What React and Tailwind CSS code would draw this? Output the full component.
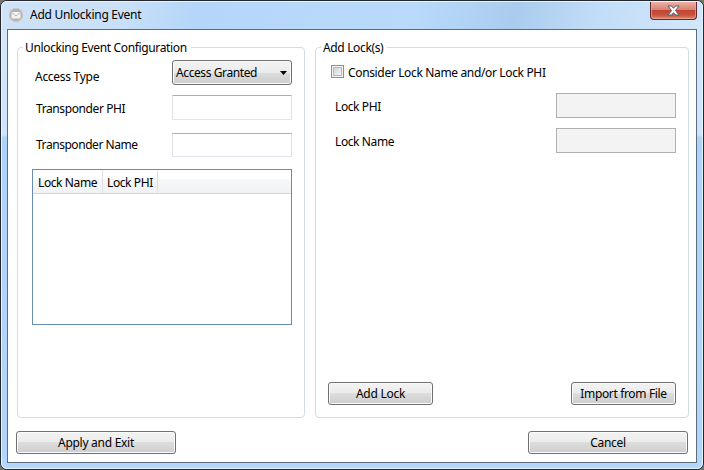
const buttonFace =
  'flex items-center justify-center h-[23px] rounded-[3px] border border-[#707070] bg-[linear-gradient(#f3f3f3_0%,#ebebeb_50%,#dddddd_50%,#cdcdcd_100%)] shadow-[inset_0_0_0_1px_#fafafa] whitespace-nowrap';

function Button({ className, children }) {
  return <button className={`${buttonFace} ${className}`}>{children}</button>;
}

function GroupBox({ title, className, children }) {
  return (
    <fieldset className={`h-[378px] rounded-[4px] border border-[#d0dde4] ${className}`}>
      <legend className="ml-[5px] h-[15px] pr-[4px] pl-[2px] leading-[16px] whitespace-nowrap tracking-[-0.35px]">{title}</legend>
      {children}
    </fieldset>
  );
}

function TitleBar() {
  return (
    <header className="flex h-[27px] shrink-0 items-start">
      <svg className="mt-[5px] ml-[6px] shrink-0" width="16" height="16" viewBox="0 0 16 16">
        <circle cx="8" cy="8" r="6.8" fill="#b5b3b2" stroke="#c9cbcd" />
        <rect x="3.5" y="5" width="9" height="6.5" rx="1" fill="#f4f4f4" />
        <path d="M3.8 5.6 8 9l4.2-3.4" fill="none" stroke="#b5b3b2" strokeWidth="0.9" />
      </svg>
      <h1 className="mt-[5px] ml-[6px] text-[12px] leading-[16px] whitespace-nowrap tracking-[-0.28px]">Add Unlocking Event</h1>
      <button className="mr-[5px] ml-auto flex h-[18px] w-[47px] items-center justify-center rounded-b-[4px] border border-t-0 border-[#5c2a2c] bg-[linear-gradient(#eab0a4_0%,#d98274_45%,#c04634_50%,#c9503a_75%,#df8a70_100%)] pb-[1px] shadow-[inset_0_0_0_1px_#eeb4a799]">
        <svg width="13" height="11" viewBox="0 0 13 11">
          <path
            d="M1 1h3.6l1.9 2.3L8.4 1H12L8.5 5.5 12 10H8.4L6.5 7.7 4.6 10H1l3.5-4.5z"
            fill="#fff"
            stroke="#555b6b"
            strokeWidth="1"
          />
        </svg>
      </button>
    </header>
  );
}

function UnlockingConfig() {
  return (
    <GroupBox title="Unlocking Event Configuration" className="w-[288px]">
      <div className="mt-[5px] mr-[12px] ml-[17px] flex h-[25px] justify-between">
        <label className="mt-[9px] leading-[16px]">Access Type</label>
        <div className="flex w-[120px] items-center justify-between rounded-[3px] border border-[#707070] bg-[linear-gradient(#f3f3f3_0%,#ebebeb_50%,#dddddd_50%,#cdcdcd_100%)] pr-[4px] pl-[3px] shadow-[inset_0_0_0_1px_#fafafa]">
          <span className="leading-[16px] whitespace-nowrap tracking-[-0.4px]">Access Granted</span>
          <svg width="7" height="4" viewBox="0 0 7 4">
            <path d="M0 0h7L3.5 4z" fill="#000" />
          </svg>
        </div>
      </div>
      <div className="mt-[10px] mr-[12px] ml-[18px] flex h-[25px] justify-between">
        <label className="mt-[6px] leading-[16px] tracking-[-0.4px]">Transponder PHI</label>
        <input className="w-[120px] border border-[#e0e4ea] border-t-[#abadb3] bg-white" />
      </div>
      <div className="mt-[13px] mr-[12px] ml-[18px] flex h-[24px] justify-between">
        <label className="mt-[4px] leading-[16px] tracking-[-0.45px]">Transponder Name</label>
        <input className="w-[120px] border border-[#e0e4ea] border-t-[#abadb3] bg-white" />
      </div>
      <div className="mt-[12px] ml-[14px] h-[156px] w-[260px] border border-[#688caf] bg-white">
        <div className="flex h-[24px] border-b border-[#d5d5d5] bg-[linear-gradient(#ffffff_0%,#ffffff_40%,#f7f8fa_41%,#f1f2f4_100%)] leading-[25px] whitespace-nowrap tracking-[-0.4px]">
          <div className="w-[70px] border-r border-[#dfe0e3] pl-[5px]">Lock Name</div>
          <div className="w-[55px] border-r border-[#dfe0e3] pl-[4px]">Lock PHI</div>
        </div>
      </div>
    </GroupBox>
  );
}

function AddLocks() {
  return (
    <GroupBox title="Add Lock(s)" className="flex w-[374px] flex-col">
      <div className="mt-[10px] ml-[15px] flex h-[16px] items-start">
        <span className="flex h-[13px] w-[13px] items-center justify-center border border-[#8e8f8f] bg-[#f4f4f4]">
          <span className="h-[9px] w-[9px] border border-[#b4b8be] bg-linear-to-br from-[#cfd3d8] to-[#f6f6f6]" />
        </span>
        <label className="ml-[4px] leading-[16px] whitespace-nowrap tracking-[-0.35px]">Consider Lock Name and/or Lock PHI</label>
      </div>
      <div className="mt-[12px] mr-[12px] ml-[19px] flex h-[25px] justify-between">
        <label className="mt-[6px] leading-[16px] tracking-[-0.4px]">Lock PHI</label>
        <input disabled className="w-[120px] border border-[#afafaf] bg-[#f3f3f3]" />
      </div>
      <div className="mt-[10px] mr-[12px] ml-[19px] flex h-[25px] justify-between">
        <label className="mt-[6px] leading-[16px] tracking-[-0.4px]">Lock Name</label>
        <input disabled className="w-[120px] border border-[#afafaf] bg-[#f3f3f3]" />
      </div>
      <div className="mt-auto mr-[12px] mb-[12px] ml-[12px] flex justify-between">
        <Button className="w-[105px]">Add Lock</Button>
        <Button className="w-[105px] tracking-[-0.35px]">Import from File</Button>
      </div>
    </GroupBox>
  );
}

export default function App() {
  return (
    <div className="h-[470px] w-[704px] bg-[#77756f] font-['Noto_Sans','Open_Sans',sans-serif] text-[12px] tracking-[-0.28px] text-black">
      <div className="flex h-full flex-col rounded-[7px] border border-[#23272e] bg-[linear-gradient(#d5e8fa_0px,#cfe4fa_134px,#aed3f8_136px,#b3d6fa_100%)]">
        <div className="flex h-full flex-col rounded-[6px] border border-[#e4f4ff] bg-[linear-gradient(105deg,#cfe2f6_0px,#c9e0f8_120px,#b4d6f9_190px,#b9dafa_400px,#a9ccee_500px,#c2ddf7_580px,#d5e9fc_700px)] bg-[length:100%_28px] bg-no-repeat">
          <TitleBar />
          <main className="mx-[5px] flex h-[434px] shrink-0 flex-col border border-[#5c6c7c] bg-white">
            <div className="mt-[10px] ml-[9px] flex gap-[10px]">
              <UnlockingConfig />
              <AddLocks />
            </div>
            <div className="mt-[13px] mr-[8px] ml-[8px] flex justify-between">
              <Button className="w-[160px]">Apply and Exit</Button>
              <Button className="w-[160px]">Cancel</Button>
            </div>
          </main>
        </div>
      </div>
    </div>
  );
}
